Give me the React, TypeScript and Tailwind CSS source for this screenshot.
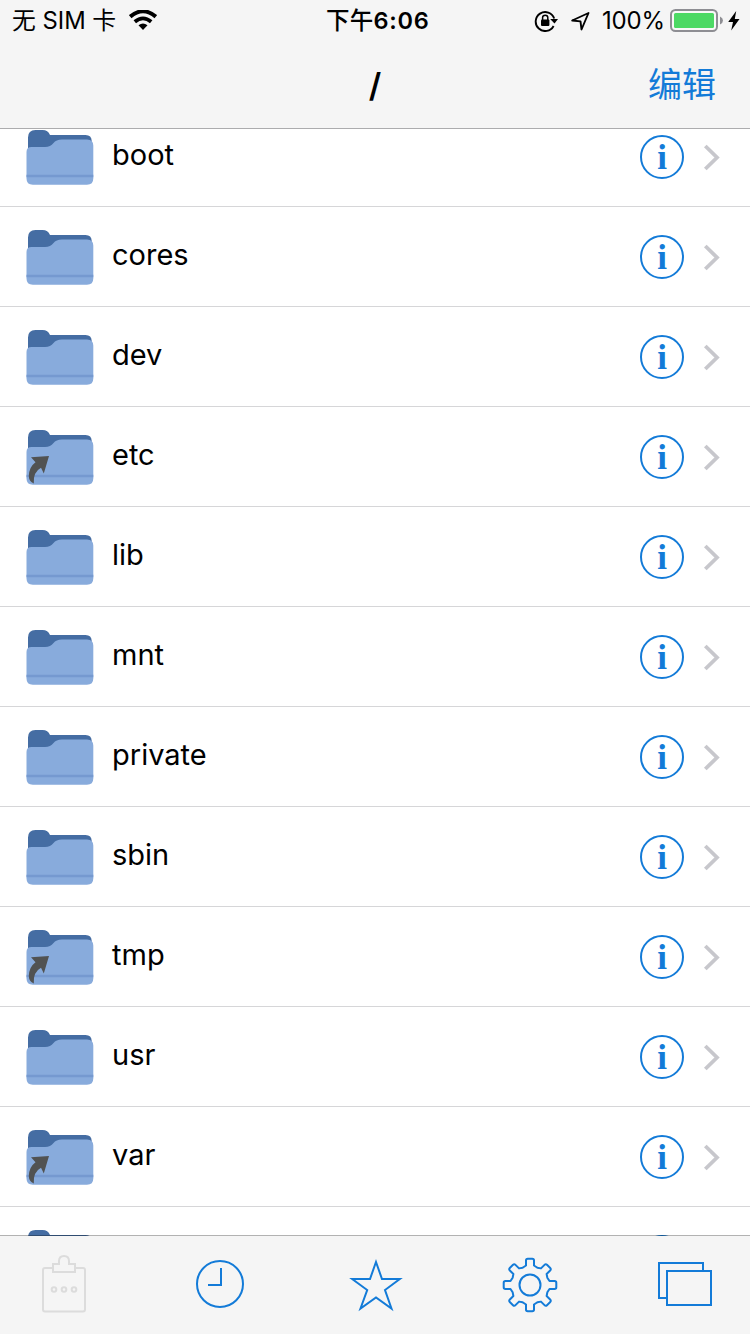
import React from "react";

const BLUE = "#137bd8";

type Entry = { name: string; link?: boolean };

const entries: Entry[] = [
  { name: "boot" },
  { name: "cores" },
  { name: "dev" },
  { name: "etc", link: true },
  { name: "lib" },
  { name: "mnt" },
  { name: "private" },
  { name: "sbin" },
  { name: "tmp", link: true },
  { name: "usr" },
  { name: "var", link: true },
  { name: "" },
];

function Folder({ link }: { link?: boolean }) {
  return (
    <svg width="68" height="56" viewBox="0 0 68 56" className="block shrink-0">
      <path d="M2 34V7.500Q2 0 9.500 0H16.500Q22 0 24 5H59.500Q65.700 5 65.700 11V34Z" fill="#456da3" />
      <path d="M.5 22Q.5 17 5.500 17H19Q24.500 17 27.500 13Q30 9.500 36 9.500H61Q67.300 9.500 67.300 15.500V48.500Q67.300 54.700 61 54.700H6.800Q.5 54.700 .5 48.500Z" fill="#88abdc" />
      <path d="M.5 46H67.300" stroke="#7599d0" strokeWidth="2.400" />
      {link && (
        <path d="M5 27.200L23 26L17.800 43.500L15 37.800Q7 42 7.800 53.500Q3 51.500 2.800 46Q3 37 9.500 32.200Z" fill="#515252" />
      )}
    </svg>
  );
}

function Info({ blank }: { blank: boolean }) {
  return (
    <span className="flex h-11 w-11 items-center justify-center rounded-full border-2 border-[#137bd8]">
      {!blank && (
        <span className="pt-px font-['Liberation_Serif',serif] text-[35px] leading-[39px] font-bold text-[#137bd8]">
          i
        </span>
      )}
    </span>
  );
}

function Row({ name, link }: Entry) {
  return (
    <li className="flex h-[100px] shrink-0 border-b border-[#d6d6d8] pl-[26px] pr-[30px]">
      <div className="pt-[23px]">
        <Folder link={link} />
      </div>
      <span className="grow pt-[30px] pl-[18px] text-[29px] leading-[36px] text-black">{name}</span>
      <div className="pt-[28px]">
        <Info blank={name === ""} />
      </div>
      <svg width="17" height="28" viewBox="0 0 17 28" fill="none" className="mt-[36px] ml-[19px] block">
        <path d="M2.300 3L14 14.500L2.300 26" stroke="#c7c7cc" strokeWidth="3.800" />
      </svg>
    </li>
  );
}

function StatusBar() {
  return (
    <div className="flex h-10 items-center pt-px text-[24px] leading-none text-black">
      <div className="flex w-[326px] items-center pl-3">
        <span className="pt-px text-[23.800px] whitespace-pre">无 SIM 卡</span>
        <svg width="28" height="20" viewBox="0 0 28 20" fill="none" stroke="#000" className="ml-[13px]">
          <path d="M1.200 6.600Q14-4 26.800 6.600" strokeWidth="4" />
          <path d="M5.800 11.800Q14 5 22.200 11.800" strokeWidth="3.800" />
          <path d="M9.500 15.300Q14 11.700 18.500 15.300L14 20Z" fill="#000" stroke="none" />
        </svg>
      </div>
      <span className="w-[208px] pt-px text-[23.500px] font-semibold tracking-[0.8px]">
        <span className="font-medium tracking-[0.2px]">下午</span>6:06
      </span>
      <svg width="24" height="22" viewBox="0 0 24 22" fill="none" stroke="#000" strokeWidth="1.900">
        <path d="M19.600 16A9.500 9.500 0 1 1 20.200 8.500" />
        <path d="M16.200 9H24L20.500 13.500Z" fill="#000" stroke="none" />
        <rect x="7" y="9.500" width="8.400" height="6.500" rx="1" fill="#000" stroke="none" />
        <path d="M8.600 10V7.500Q8.600 5.200 11.200 5.200T13.800 7.500V10" strokeWidth="1.500" />
      </svg>
      <svg width="20" height="20" viewBox="0 0 20 20" fill="none" className="ml-[13px]">
        <path d="M1.200 9.500L17.500 2L10.500 18.500L9.500 10.400Z" stroke="#000" strokeWidth="1.900" strokeLinejoin="round" />
      </svg>
      <span className="ml-[11px] w-[65px] pt-px text-[24px] tracking-[-0.2px]">100%</span>
      <svg width="54" height="24" viewBox="0 0 54 24" className="ml-[3px]">
        <rect x="1" y="1" width="46" height="21" rx="4.500" fill="#f8f8f8" stroke="#8e8e93" strokeWidth="2" />
        <rect x="4" y="4" width="40" height="15" rx="1.500" fill="#4cd964" />
        <path d="M50 7.500Q53 9 53 11.500T50 15.500Z" fill="#8e8e93" />
      </svg>
      <svg width="12" height="20" viewBox="0 0 12 20" className="ml-[4px]">
        <path d="M8.200 0L.2 11H5L3.200 19.500L11.500 8H6.800Z" fill="#000" />
      </svg>
    </div>
  );
}

function gearPath() {
  const pts: string[] = [];
  const at = (x: number, y: number, a: number) =>
    `${(28 + x * Math.cos(a) - y * Math.sin(a)).toFixed(2)} ${(28 + x * Math.sin(a) + y * Math.cos(a)).toFixed(2)}`;
  for (let k = 0; k < 8; k++) {
    const a = (k * Math.PI) / 4;
    pts.push(
      `${k ? "L" : "M"}${at(17.5, -7, a)}L${at(19.5, -4, a)}L${at(24.5, -4, a)}Q${at(26.3, -4, a)} ${at(26.3, -2.3, a)}L${at(26.3, 2.3, a)}Q${at(26.3, 4, a)} ${at(24.5, 4, a)}L${at(19.5, 4, a)}L${at(17.5, 7, a)}`
    );
  }
  return pts.join("") + "Z";
}

function Toolbar() {
  return (
    <footer className="relative -mt-px flex h-[99px] shrink-0 items-start border-t border-black/30 bg-[#f5f5f5] bg-clip-padding pt-[18px] pl-[40px]">
      <svg width="48" height="62" viewBox="0 0 48 62" fill="none" stroke="#dcdcdc" strokeWidth="2">
        <path d="M13 14H5Q3 14 3 16V55.500Q3 57.500 5 57.500H43Q45 57.500 45 55.500V16Q45 14 43 14H35" />
        <path d="M13 18V10H19V7Q19 2 24 2T29 7V10H35V18Z" />
        <circle cx="14" cy="35.500" r="2.300" />
        <circle cx="24" cy="35.500" r="2.300" />
        <circle cx="34" cy="35.500" r="2.300" />
      </svg>
      <svg width="50" height="60" viewBox="0 0 50 60" fill="none" stroke={BLUE} strokeWidth="2" className="ml-[107px]">
        <circle cx="25" cy="30" r="23" />
        <path d="M26 14V31H13" />
      </svg>
      <svg width="54" height="60" viewBox="0 0 54 60" fill="none" stroke={BLUE} strokeWidth="2" className="ml-[104px]">
        <path d="M27 8L33 25H50.800L36 36L42.500 54.500L27 43.500L11.500 54.500L18.200 36L3.200 25H21Z" />
      </svg>
      <svg width="56" height="60" viewBox="0 0 56 60" fill="none" stroke={BLUE} strokeWidth="2" className="ml-[99px]">
        <g transform="translate(0 3)">
          <path d={gearPath()} strokeLinejoin="round" />
          <circle cx="28" cy="28" r="10.500" />
        </g>
      </svg>
      <svg width="56" height="60" viewBox="0 0 56 60" fill="none" stroke={BLUE} strokeWidth="2" className="ml-[99px]">
        <path d="M10 44H2V9H46V17" />
        <rect x="10" y="17" width="44" height="34" />
      </svg>
    </footer>
  );
}

export default function App() {
  return (
    <div className="flex h-[1334px] w-[750px] flex-col overflow-hidden bg-white font-['Inter','Noto_Sans_CJK_SC',sans-serif]">
      <header className="h-[129px] shrink-0 border-b border-[#acacae] bg-[#f5f5f5]">
        <StatusBar />
        <div className="grid h-[88px] grid-cols-3 items-center pt-[2px]">
          <span />
          <h1 className="text-center text-[33px] leading-none font-semibold">/</h1>
          <button className="pr-[34px] text-right text-[34px] leading-none text-[#137bd8]">编辑</button>
        </div>
      </header>
      <main className="min-h-0 grow overflow-hidden">
        <ul className="-mt-[22px] flex flex-col">
          {entries.map((e, i) => (
            <Row key={i} {...e} />
          ))}
        </ul>
      </main>
      <Toolbar />
    </div>
  );
}
